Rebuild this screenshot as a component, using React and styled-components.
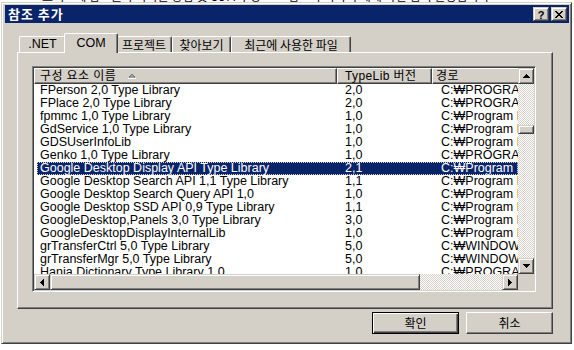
import React from 'react';
import styled, { createGlobalStyle, css } from 'styled-components';

const FACE = '#d4d0c8';
const HI = '#ffffff';
const SH = '#808080';
const DK = '#404040';
const NAVY = '#0a246a';
const FONT = '"Liberation Sans", "Noto Sans CJK KR", sans-serif';
const KFONT = '"Noto Sans CJK KR", "Liberation Sans", sans-serif';

const Global = createGlobalStyle`
  html, body { margin: 0; padding: 0; background: #fff; }
  body { font-family: ${FONT}; font-size: 12px; color: #000; }
  * { box-sizing: border-box; }
`;

const raised = css`
  border: 1px solid;
  border-color: ${FACE} ${DK} ${DK} ${FACE};
  box-shadow: inset 1px 1px ${HI}, inset -1px -1px ${SH};
  background: ${FACE};
`;

const dither = css`
  background-color: ${FACE};
  background-image: conic-gradient(#fff 0 25%, transparent 0 50%, #fff 0 75%, transparent 0);
  background-size: 2px 2px;
`;

const Page = styled.div`
  padding-left: 1px;
`;

const BackStrip = styled.div`
  height: 2px;
  overflow: hidden;
  padding-left: 30px;
  white-space: nowrap;
  span {
    display: block;
    margin-top: -10px;
    line-height: 12px;
    font-size: 12px;
    font-family: ${KFONT};
  }
`;

const Window = styled.div`
  width: 571px;
  height: 342px;
  background: ${FACE};
  border: 1px solid;
  border-color: ${FACE} ${DK} ${DK} ${FACE};
  box-shadow: inset 1px 1px ${HI}, inset -1px -1px ${SH};
  padding: 2px 2px 2px 3px;
  display: flex;
  flex-direction: column;
`;

const TitleBar = styled.div`
  height: 18px;
  background: ${NAVY};
  display: flex;
  align-items: center;
  padding-left: 3px;
`;

const TitleText = styled.div`
  color: #fff;
  font-family: ${KFONT};
  font-weight: bold;
  font-size: 13px;
  line-height: 18px;
  letter-spacing: 1px;
`;

const CapButtons = styled.div`
  margin-left: auto;
  margin-right: 2px;
  display: flex;
  gap: 2px;
`;

const CapButton = styled.div`
  ${raised};
  width: 16px;
  height: 14px;
  display: flex;
  align-items: center;
  justify-content: center;
  font-family: "Liberation Sans", sans-serif;
  font-weight: bold;
  font-size: 11px;
  line-height: 12px;
  padding-top: 1px;
`;

const Body = styled.div`
  flex: 1;
  display: flex;
  flex-direction: column;
  padding: 10px 0 0 12px;
`;

const TabRow = styled.div`
  height: 19px;
  display: flex;
  align-items: flex-end;
  padding-left: 2px;
`;

const Tab = styled.div`
  position: relative;
  width: ${p => p.$w}px;
  height: ${p => (p.$active ? 20 : 16)}px;
  margin: ${p => (p.$active ? '0 -2px -1px -2px' : '0')};
  z-index: ${p => (p.$active ? 1 : 0)};
  background: ${FACE};
  border-top: 1px solid ${HI};
  border-left: 1px solid ${HI};
  border-right: 1px solid ${DK};
  border-radius: 2px 2px 0 0;
  box-shadow: inset -1px 0 ${SH};
  display: flex;
  align-items: flex-start;
  justify-content: center;
  padding-top: ${p => (p.$active ? 3 : 1)}px;
  font-family: ${p => (p.$latin ? FONT : KFONT)};
  font-size: ${p => (p.$latin ? 12.5 : 12)}px;
  line-height: 13px;
  white-space: nowrap;
`;

const Panel = styled.div`
  width: 536px;
  height: 257px;
  border-top: 1px solid ${HI};
  border-left: 1px solid ${HI};
  border-right: 1px solid ${DK};
  border-bottom: 1px solid ${DK};
  box-shadow: inset -1px -1px ${SH};
  padding: 13px 0 0 14px;
`;

const ListView = styled.div`
  width: 504px;
  height: 226px;
  border: 1px solid;
  border-color: ${SH} ${HI} ${HI} ${SH};
  box-shadow: inset 1px 1px ${DK}, inset -1px -1px ${FACE};
  padding: 1px;
  display: grid;
  grid-template-columns: 1fr 16px;
  grid-template-rows: 1fr 16px;
  background: #fff;
`;

const ListArea = styled.div`
  overflow: hidden;
  background: #fff;
`;

const Header = styled.div`
  display: flex;
  height: 16px;
`;

const HeaderCell = styled.div`
  flex: none;
  width: ${p => p.$w}px;
  height: 16px;
  border: 1px solid;
  border-color: ${HI} ${DK} ${DK} ${HI};
  box-shadow: inset -1px -1px ${SH};
  background: ${FACE};
  padding-left: ${p => p.$pl}px;
  display: flex;
  align-items: center;
  font-size: 12px;
  line-height: 14px;
  white-space: nowrap;
  overflow: hidden;
`;

const HeaderLabel = styled.span`
  font-family: ${FONT};
  letter-spacing: 0.4px;
`;

const SortMark = styled.svg`
  margin-left: 12px;
  flex: none;
`;

const Row = styled.div`
  display: flex;
  height: 13px;
  margin-left: 3px;
  width: 481px;
  line-height: 13px;
  font-size: 12.5px;
  white-space: nowrap;
  background: ${p => (p.$sel ? NAVY : 'transparent')};
  color: ${p => (p.$sel ? '#fff' : '#000')};
  outline: ${p => (p.$sel ? `1px dotted ${FACE}` : 'none')};
  outline-offset: -1px;
`;

const Cell = styled.div`
  flex: none;
  width: ${p => p.$w}px;
  padding-left: ${p => p.$pl}px;
  overflow: hidden;
`;

const VScroll = styled.div`
  display: flex;
  flex-direction: column;
  ${dither};
`;

const HScroll = styled.div`
  display: flex;
  ${dither};
`;

const Track = styled.div`
  flex: 1;
  display: flex;
  flex-direction: ${p => (p.$vertical ? 'column' : 'row')};
`;

const Thumb = styled.div`
  ${raised};
  flex: none;
  width: ${p => p.$w}px;
  height: ${p => p.$h}px;
  margin-top: ${p => p.$mt || 0}px;
`;

const ArrowBtn = styled.div`
  ${raised};
  flex: none;
  width: 16px;
  height: 16px;
  display: flex;
  align-items: center;
  justify-content: center;
`;

const Corner = styled.div`
  background: ${FACE};
`;

const ButtonRow = styled.div`
  width: 536px;
  display: flex;
  justify-content: flex-end;
  gap: 7px;
  margin-top: 3px;
`;

const DlgButton = styled.div`
  width: 87px;
  height: 22px;
  background: ${FACE};
  display: flex;
  align-items: center;
  justify-content: center;
  font-family: ${KFONT};
  font-size: 12px;
  line-height: 14px;
  ${p =>
    p.$default
      ? css`
          border: 1px solid #000;
          box-shadow: inset 1px 1px ${HI}, inset -1px -1px ${DK}, inset -2px -2px ${SH};
        `
      : css`
          border: 1px solid;
          border-color: ${HI} ${DK} ${DK} ${HI};
          box-shadow: inset -1px -1px ${SH};
        `}
`;

function Arrow({ dir }) {
  const rects = [];
  for (let i = 0; i < 4; i++) {
    const len = 1 + i * 2;
    if (dir === 'up') rects.push(<rect key={i} x={3 - i} y={i} width={len} height={1} />);
    if (dir === 'down') rects.push(<rect key={i} x={3 - i} y={3 - i} width={len} height={1} />);
    if (dir === 'left') rects.push(<rect key={i} x={i} y={3 - i} width={1} height={len} />);
    if (dir === 'right') rects.push(<rect key={i} x={3 - i} y={3 - i} width={1} height={len} />);
  }
  const vert = dir === 'up' || dir === 'down';
  return (
    <svg width={vert ? 7 : 4} height={vert ? 4 : 7} shapeRendering="crispEdges" fill="#000">
      {rects}
    </svg>
  );
}

function CloseGlyph() {
  const rects = [];
  for (let i = 0; i < 7; i++) {
    rects.push(<rect key={'a' + i} x={i} y={i} width={2} height={1} />);
    rects.push(<rect key={'b' + i} x={6 - i} y={i} width={2} height={1} />);
  }
  return (
    <svg width="8" height="7" shapeRendering="crispEdges" fill="#000">
      {rects}
    </svg>
  );
}

const rows = [
  ['FPerson 2,0 Type Library', '2,0', 'C:₩PROGRA~1₩COMMON~1₩'],
  ['FPlace 2,0 Type Library', '2,0', 'C:₩PROGRA~1₩COMMON~1₩'],
  ['fpmmc 1,0 Type Library', '1,0', 'C:₩Program Files₩'],
  ['GdService 1,0 Type Library', '1,0', 'C:₩Program Files₩'],
  ['GDSUserInfoLib', '1,0', 'C:₩Program Files₩'],
  ['Genko 1,0 Type Library', '1,0', 'C:₩PROGRA~1₩COMMON~1₩'],
  ['Google Desktop Display API Type Library', '2,1', 'C:₩Program Files₩', true],
  ['Google Desktop Search API 1,1 Type Library', '1,1', 'C:₩Program Files₩'],
  ['Google Desktop Search Query API 1,0', '1,0', 'C:₩Program Files₩'],
  ['Google Desktop SSD API 0,9 Type Library', '1,1', 'C:₩Program Files₩'],
  ['GoogleDesktop,Panels 3,0 Type Library', '3,0', 'C:₩Program Files₩'],
  ['GoogleDesktopDisplayInternalLib', '1,0', 'C:₩Program Files₩'],
  ['grTransferCtrl 5,0 Type Library', '5,0', 'C:₩WINDOWS₩system32₩'],
  ['grTransferMgr 5,0 Type Library', '5,0', 'C:₩WINDOWS₩system32₩'],
  ['Hanja Dictionary Type Library 1,0', '1,0', 'C:₩PROGRA~1₩COMMON~1₩'],
];

const tabs = [
  { label: '.NET', w: 47, latin: true },
  { label: 'COM', w: 54, latin: true, active: true },
  { label: '프로젝트', w: 56 },
  { label: '찾아보기', w: 59 },
  { label: '최근에 사용한 파일', w: 120 },
];

export default function App() {
  return (
    <>
      <Global />
      <Page>
        <BackStrip>
          <span>프로젝트에 참조를 추가하는 방법 및 COM 구성 요소 참조 추가하기 예제 화면 캡처 설명입니다</span>
        </BackStrip>
        <Window>
          <TitleBar>
            <TitleText>참조 추가</TitleText>
            <CapButtons>
              <CapButton>?</CapButton>
              <CapButton>
                <CloseGlyph />
              </CapButton>
            </CapButtons>
          </TitleBar>
          <Body>
            <TabRow>
              {tabs.map(t => (
                <Tab key={t.label} $w={t.w} $active={t.active} $latin={t.latin}>
                  {t.label}
                </Tab>
              ))}
            </TabRow>
            <Panel>
              <ListView>
                <ListArea>
                  <Header>
                    <HeaderCell $w={303} $pl={5}>
                      <HeaderLabel>구성 요소 이름</HeaderLabel>
                      <SortMark width="8" height="5" shapeRendering="crispEdges">
                        <polygon points="0.5,4.5 3.5,0.5 4.5,0.5 7.5,4.5" fill="#a0a0a0" stroke="#808080" strokeWidth="1" />
                        <rect x="0" y="4" width="8" height="1" fill="#fff" />
                      </SortMark>
                    </HeaderCell>
                    <HeaderCell $w={95} $pl={7}>
                      <HeaderLabel>TypeLib 버전</HeaderLabel>
                    </HeaderCell>
                    <HeaderCell $w={100} $pl={3}>
                      <HeaderLabel>경로</HeaderLabel>
                    </HeaderCell>
                  </Header>
                  {rows.map(([name, ver, path, sel]) => (
                    <Row key={name} $sel={sel}>
                      <Cell $w={300} $pl={3}>{name}</Cell>
                      <Cell $w={95} $pl={8}>{ver}</Cell>
                      <Cell $w={86} $pl={9}>{path}</Cell>
                    </Row>
                  ))}
                </ListArea>
                <VScroll>
                  <ArrowBtn><Arrow dir="up" /></ArrowBtn>
                  <Track $vertical>
                    <Thumb $w={16} $h={9} $mt={41} />
                  </Track>
                  <ArrowBtn><Arrow dir="down" /></ArrowBtn>
                </VScroll>
                <HScroll>
                  <ArrowBtn><Arrow dir="left" /></ArrowBtn>
                  <Track>
                    <Thumb $w={370} $h={16} />
                  </Track>
                  <ArrowBtn><Arrow dir="right" /></ArrowBtn>
                </HScroll>
                <Corner />
              </ListView>
            </Panel>
            <ButtonRow>
              <DlgButton $default>확인</DlgButton>
              <DlgButton>취소</DlgButton>
            </ButtonRow>
          </Body>
        </Window>
      </Page>
    </>
  );
}
